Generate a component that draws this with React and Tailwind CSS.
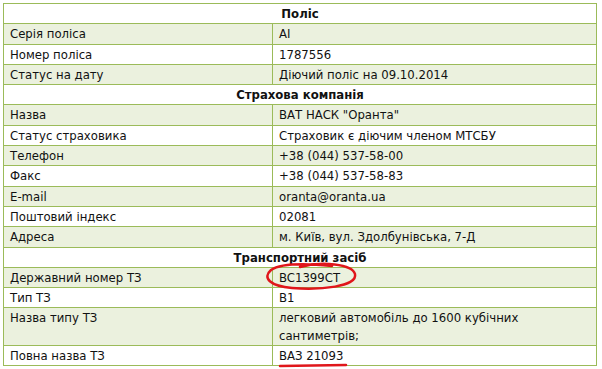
const sections = [
  {
    title: "Поліс",
    rows: [
      ["Серія поліса", "AI"],
      ["Номер поліса", "1787556"],
      ["Статус на дату", "Діючий поліс на 09.10.2014"],
    ],
  },
  {
    title: "Страхова компанія",
    rows: [
      ["Назва", 'ВАТ НАСК "Оранта"'],
      ["Статус страховика", "Страховик є діючим членом МТСБУ"],
      ["Телефон", "+38 (044) 537-58-00"],
      ["Факс", "+38 (044) 537-58-83"],
      ["E-mail", "oranta@oranta.ua"],
      ["Поштовий індекс", "02081"],
      ["Адреса", "м. Київ, вул. Здолбунівська, 7-Д"],
    ],
  },
  {
    title: "Транспортний засіб",
    rows: [
      ["Державний номер ТЗ", "BC1399CT"],
      ["Тип ТЗ", "B1"],
      ["Назва типу ТЗ", "легковий автомобіль до 1600 кубічних сантиметрів;"],
      ["Повна назва ТЗ", "ВАЗ 21093"],
    ],
  },
];

const cell =
  "border border-[#9bbb59] px-[6px] py-px leading-[17.3px] align-top";

export default function App() {
  return (
    <div
      className="relative w-[602px] h-[369px] bg-white pt-[3px] pl-[3px] text-[13px] text-[#111]"
      style={{ fontFamily: "Tahoma, 'DejaVu Sans Condensed', 'DejaVu Sans', sans-serif" }}
    >
      <table className="w-[594px] border-collapse table-fixed">
        <colgroup>
          <col className="w-[269px]" />
          <col />
        </colgroup>
        <tbody>
          {sections.map((s) => (
            <>
              <tr key={s.title} className="bg-white">
                <td colSpan={2} className={cell + " text-center font-bold"}>
                  {s.title}
                </td>
              </tr>
              {s.rows.map(([k, v], i) => (
                <tr key={k} className={i % 2 === 0 ? "bg-[#ebf1de]" : "bg-white"}>
                  <td className={cell}>{k}</td>
                  <td className={cell + (k === "Назва типу ТЗ" ? " pr-[60px]" : "")}>{v}</td>
                </tr>
              ))}
            </>
          ))}
        </tbody>
      </table>

      {/* red marker annotations */}
      <svg className="absolute left-0 top-0 pointer-events-none" width="602" height="369">
        <path
          d="M300 267 C 322 261, 352 264, 355 274 C 358 287, 320 290, 292 288 C 270 286, 262 278, 271 270 C 280 264, 302 263, 332 266"
          fill="none"
          stroke="#e0161b"
          strokeWidth="2.5"
          strokeLinecap="round"
        />
        <path d="M280 366 L 346 365" stroke="#e0161b" strokeWidth="2.5" strokeLinecap="round" />
      </svg>
    </div>
  );
}
